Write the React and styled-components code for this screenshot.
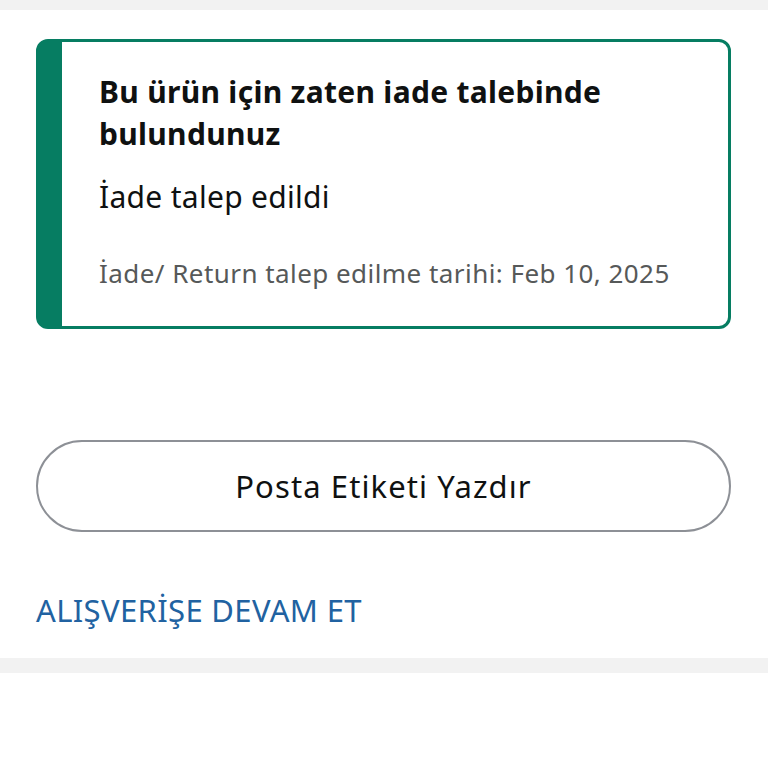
import React from "react";
import styled, { createGlobalStyle } from "styled-components";

const Global = createGlobalStyle`
  html, body { margin: 0; padding: 0; background: #fff; }
  body { font-family: "Noto Sans", "Open Sans", sans-serif; }
`;

const Band = styled.div`
  height: ${(p) => p.$h}px;
  background: #f2f2f2;
`;

const Content = styled.main`
  padding: 29px 37px 0 36px;
  height: 648px;
  box-sizing: border-box;
  display: flex;
  flex-direction: column;
`;

const Card = styled.section`
  border: 3px solid #067d62;
  border-left: 26px solid #067d62;
  border-radius: 12px;
  padding: 29px 20px 0 37px;
  height: 290px;
  box-sizing: border-box;
`;

const Title = styled.h2`
  margin: 0;
  font-size: 30px;
  line-height: 42px;
  font-weight: 700;
  color: #0f1111;
  letter-spacing: 0.3px;
`;

const Status = styled.p`
  margin: 22px 0 0;
  font-size: 30px;
  line-height: 40px;
  color: #0f1111;
  letter-spacing: 0.3px;
`;

const DateLine = styled.p`
  margin: 40px 0 0;
  font-size: 26px;
  line-height: 32px;
  color: #565959;
  letter-spacing: 0.45px;
  white-space: nowrap;
`;

const PrintButton = styled.button`
  margin-top: 111px;
  height: 92px;
  width: 100%;
  border: 2px solid #8d9096;
  border-radius: 46px;
  background: #fff;
  font-family: inherit;
  font-size: 31px;
  letter-spacing: 1.1px;
  color: #0f1111;
  cursor: pointer;
`;

const Link = styled.a`
  margin-top: 58px;
  font-size: 31px;
  line-height: 40px;
  letter-spacing: 0.35px;
  color: #2162a1;
  text-decoration: none;
  align-self: flex-start;
`;

export default function App() {
  return (
    <>
      <Global />
      <Band $h={10} />
      <Content>
        <Card>
          <Title>Bu ürün için zaten iade talebinde bulundunuz</Title>
          <Status>İade talep edildi</Status>
          <DateLine>İade/ Return talep edilme tarihi: Feb 10, 2025</DateLine>
        </Card>
        <PrintButton>Posta Etiketi Yazdır</PrintButton>
        <Link href="#">ALIŞVERİŞE DEVAM ET</Link>
      </Content>
      <Band $h={15} />
    </>
  );
}
